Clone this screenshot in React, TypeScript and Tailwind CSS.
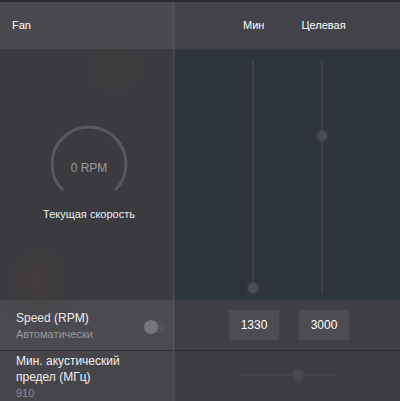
import React from "react";

function Gauge() {
  // arc open at the bottom, ~270 degrees
  const r = 37;
  const cx = 44;
  const cy = 44;
  const start = (135 * Math.PI) / 180;
  const end = (45 * Math.PI) / 180;
  const x1 = cx + r * Math.cos(start);
  const y1 = cy + r * Math.sin(start);
  const x2 = cx + r * Math.cos(end);
  const y2 = cy + r * Math.sin(end);
  return (
    <div className="relative w-[88px] h-[88px]">
      <svg width="88" height="88" viewBox="0 0 88 88" className="absolute inset-0">
        <path
          d={`M ${x1} ${y1} A ${r} ${r} 0 1 1 ${x2} ${y2}`}
          fill="none"
          stroke="#59585d"
          strokeWidth="3"
        />
      </svg>
      <div className="absolute inset-0 flex items-center justify-center pt-[7px] text-[12px] text-[#9c9ba0]">
        0 RPM
      </div>
    </div>
  );
}

function VSlider({ pos }: { pos: number }) {
  return (
    <div className="relative w-[10px] h-[232px] flex justify-center">
      <div className="w-[2px] h-full bg-[#3d4148]" />
      <div
        className="absolute left-0 w-[10px] h-[10px] rounded-full bg-[#4a4e55] shadow-[0_0_4px_#4a4e55]"
        style={{ top: pos }}
      />
    </div>
  );
}

export default function App() {
  return (
    <div
      className="w-[400px] h-[401px] bg-[#2a2a2e] pt-[2px] text-white overflow-hidden"
      style={{ fontFamily: '"Liberation Sans", Arial, sans-serif' }}
    >
      <div className="grid grid-cols-[175px_225px] grid-rows-[48px_250px_50px_51px]">
        {/* header */}
        <div className="bg-[#4a494e] border-r-[3px] border-[#504f54] border-b border-b-[#3a393e] flex items-center pl-3 text-[11px]">
          Fan
        </div>
        <div className="bg-[#434248] border-b border-[#3a393e] flex items-center text-[11px]">
          <span className="ml-[68px]">Мин</span>
          <span className="ml-[37px]">Целевая</span>
        </div>

        {/* body */}
        <div className="relative bg-[#3b3a3f] border-r-[3px] border-[#434247] flex flex-col items-center pt-[70px] pl-[6px]">
          <div className="absolute left-[95px] top-[5px] w-[40px] h-[30px] bg-[#46403c] blur-md opacity-60" />
          <div className="absolute left-[15px] top-[208px] w-[45px] h-[45px] bg-[#453f3c] blur-md opacity-70" />
          <Gauge />
          <div className="leading-[13px] text-[11px] text-[#eeeeee] relative">Текущая скорость</div>
        </div>
        <div className="bg-[#2e343c] flex pl-[73px] pt-[11px] gap-[59px]">
          <VSlider pos={222} />
          <VSlider pos={70} />
        </div>

        {/* speed row */}
        <div className="bg-[#4b4a4f] border-r-[3px] border-[#504f54] flex items-center justify-between pl-4 pr-[6px]">
          <div className="flex flex-col leading-[16px] pt-[2px]">
            <span className="text-[12px] text-[#f2f2f2]">Speed (RPM)</span>
            <span className="text-[11px] text-[#9a999e]">Автоматически</span>
          </div>
          <div className="relative w-[22px] h-[12px] rounded-full bg-[#525156] mt-[4px]">
            <div className="absolute left-[0px] top-[-1px] w-[14px] h-[14px] rounded-full bg-[#77767b] blur-[0.5px]" />
          </div>
        </div>
        <div className="bg-[#413f45] flex items-center pl-[53px] gap-[20px] border-l border-[#38373c]">
          <div className="w-[50px] h-[30px] bg-[#4d4c51] flex items-center justify-center text-[12px]">1330</div>
          <div className="w-[50px] h-[30px] bg-[#4d4c51] flex items-center justify-center text-[12px]">3000</div>
        </div>

        {/* acoustic row */}
        <div className="bg-[#46454a] border-t border-[#2e2d31] border-r-[3px] border-r-[#4b4a4f] pl-4 pt-[2px] flex flex-col leading-[16px]">
          <span className="text-[12px] text-[#f0f0f0]">Мин. акустический</span>
          <span className="text-[12px] text-[#f0f0f0]">предел (МГц)</span>
          <span className="text-[11px] text-[#8d8c91]">910</span>
        </div>
        <div className="bg-[#3d3c41] border-t border-[#2e2d31] flex items-center pl-[67px] pb-[2px]">
          <div className="relative w-[92px] h-[2px] bg-[#45444a]">
            <div className="absolute left-[50px] top-[-5px] w-[12px] h-[12px] rounded-full bg-[#4a494f] blur-[1px]" />
          </div>
        </div>
      </div>
    </div>
  );
}
